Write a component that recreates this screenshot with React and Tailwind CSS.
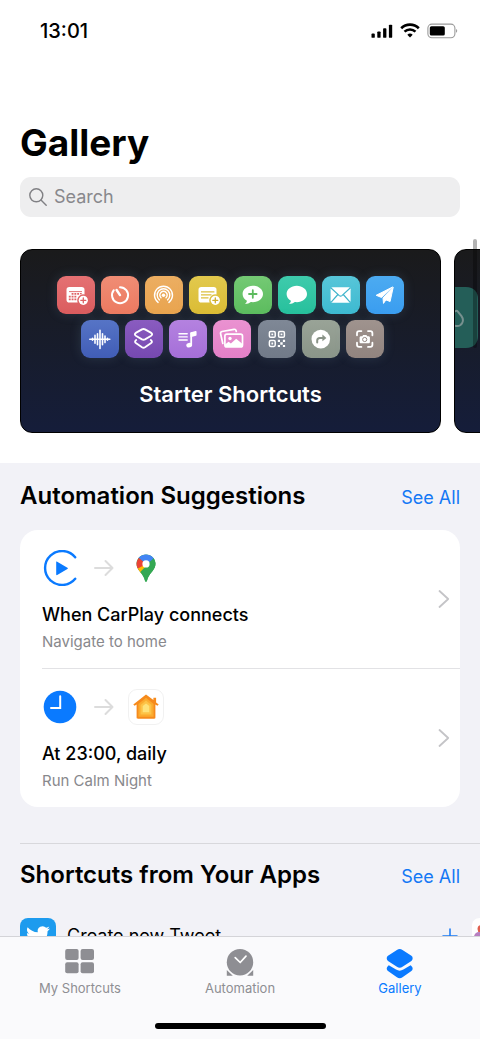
import React from "react";

function SignalIcon() {
  return (
    <svg viewBox="0 0 22 14" className="h-[14px] w-[22px]" fill="#000" aria-hidden="true">
      <rect x="0.5" y="9.6" width="3.3" height="4.2" rx="0.9" />
      <rect x="6.3" y="7.4" width="3.3" height="6.4" rx="0.9" />
      <rect x="12.1" y="4.2" width="3.3" height="9.6" rx="0.9" />
      <rect x="17.9" y="0.7" width="3.3" height="13.1" rx="0.9" />
    </svg>
  );
}

function WifiIcon() {
  return (
    <svg viewBox="0 0 20 15" className="h-[15px] w-[20px]" fill="none" stroke="#000" aria-hidden="true">
      <path d="M1.2 5.2a12.6 12.6 0 0 1 17.6 0" strokeWidth="2.6" />
      <path d="M4.5 8.7a7.9 7.9 0 0 1 11 0" strokeWidth="2.5" />
      <path d="M10 14.6l-2.7-2.8a4 4 0 0 1 5.4 0z" fill="#000" stroke="none" />
    </svg>
  );
}

function BatteryIcon() {
  return (
    <svg viewBox="0 0 31 16" className="h-4 w-[31px]" aria-hidden="true">
      <rect x="0.9" y="1.1" width="27" height="13.6" rx="4" fill="none" stroke="#9a9a9a" strokeWidth="1.1" />
      <rect x="2.8" y="3.2" width="15" height="9.4" rx="1.6" fill="#000" />
      <path d="M29.2 6.1c1.3.7 1.3 3 0 3.7z" fill="#8a8a8a" />
    </svg>
  );
}

const calendarFrame = (
  <path d="M12.3 11h12.4a2.8 2.8 0 0 1 2.8 2.8v4.6a6 6 0 0 0-6.8 8.1h-8.4a2.8 2.8 0 0 1-2.8-2.8v-9.9a2.8 2.8 0 0 1 2.8-2.8z" fill="#fff" />
);

function PlusBadge({ color }) {
  return (
    <g>
      <circle cx="26.3" cy="24.3" r="4.6" fill="#fff" />
      <path d="M26.3 21.8v5M23.8 24.3h5" stroke={color} strokeWidth="1.3" strokeLinecap="round" />
    </g>
  );
}

const bubble = (
  <path d="M18.8 9.8c-5.7 0-10.2 3.6-10.2 8.2 0 2.9 1.7 5.3 4.3 6.8-.1 1.2-.9 2.3-1.9 3.3 2.3 0 4.4-.8 5.8-2 .7.1 1.3.1 2 .1 5.7 0 10.2-3.6 10.2-8.2s-4.5-8.2-10.2-8.2z" fill="#fff" />
);

const tileGlyphs = {
  calendar: (
    <g>
      {calendarFrame}
      <path d="M12 15.6h13" stroke="#df6365" strokeWidth="0.9" />
      <path d="M14.6 17h1.9v1.8h-1.9zM17.4 17h1.9v1.8h-1.9zM20.2 17h1.9v1.8h-1.9zM23 17h1.7v1.2H23zM11.8 19.7h1.9v1.8h-1.9zM14.6 19.7h1.9v1.8h-1.9zM17.4 19.7h1.9v1.8h-1.9zM11.8 22.4h1.9v1.8h-1.9zM14.6 22.4h1.9v1.8h-1.9zM17.4 22.4h1.9v1.8h-1.9z" fill="#df6365" />
      <PlusBadge color="#de6264" />
    </g>
  ),
  timer: (
    <g fill="none" stroke="#fff" strokeLinecap="round">
      <path d="M19 11.2a8 8 0 1 1-6.2 3" strokeWidth="2" />
      <path d="M15.6 14l3.4 5.1" strokeWidth="2.4" />
    </g>
  ),
  airdrop: (
    <g fill="none" stroke="#fff" strokeWidth="1.4" strokeLinecap="round">
      <path d="M13.1 26.4a9 9 0 1 1 10.8 0" />
      <path d="M14.4 23.9a6.3 6.3 0 1 1 8.2 0" />
      <path d="M16 21.7a3.7 3.7 0 1 1 5 0" />
      <circle cx="18.5" cy="19.2" r="1.7" fill="#fff" stroke="none" />
    </g>
  ),
  note: (
    <g>
      {calendarFrame}
      <path d="M12 15.8h13.4M12 18.8h10.5M12 21.8h7.5" stroke="#dcbf3c" strokeWidth="1.3" />
      <PlusBadge color="#cfae2c" />
    </g>
  ),
  bubblePlus: (
    <g>
      {bubble}
      <path d="M18.8 14.2v7.6M15 18h7.6" stroke="#5dbb5e" strokeWidth="1.8" strokeLinecap="round" />
    </g>
  ),
  bubble,
  mail: (
    <g>
      <rect x="8.6" y="11.2" width="20" height="15.6" rx="2" fill="#fff" />
      <path d="M9 12l8.3 7.6a2 2 0 0 0 2.6 0L28.2 12M9.2 26.2l6.7-7.7M28 26.2l-6.7-7.7" fill="none" stroke="#3fb4cb" strokeWidth="1.2" />
    </g>
  ),
  plane: (
    <g fill="#fff" stroke="#fff" strokeWidth="1" strokeLinejoin="round">
      <path d="M26.6 11L10.2 19.3l5.4 2.2z" />
      <path d="M27.2 11.3L17 22.1l.5 5.3 2.4-3.5 4.2 1.6z" />
    </g>
  ),
  wave: (
    <g stroke="#fff" strokeWidth="1.6" strokeLinecap="round">
      <path d="M8.8 19.3h20M11.5 18.4v1.8M14 15.4v7.8M16.500 13.800v11M19 10.200v18.200M21.500 13.800v11M24 16v6.600M26.500 18.400v1.800" />
    </g>
  ),
  layers: (
    <g fill="none" stroke="#fff" strokeWidth="1.9" strokeLinejoin="round" strokeLinecap="round">
      <path d="M17 9.3l-5.8 3.3c-1.8 1.1-1.8 2.300 0 3.400l5.800 3.300c1 .5 2 .5 3 0l5.800-3.300c1.800-1.100 1.800-2.300 0-3.400L20 9.300c-1-.5-2-.5-3 0z" />
      <path d="M11.200 20c-1.500 1.100-1.500 2.300 0 3.300l5.800 4c1 .6 2 .6 3 0l5.800-4c1.500-1 1.500-2.200 0-3.300" />
    </g>
  ),
  music: (
    <g>
      <path d="M10 13.8h8.2M10 16.9h8.2M10 20h8.2" stroke="#fff" strokeWidth="1.4" strokeLinecap="round" />
      <path d="M22.200 25V13.200" stroke="#fff" strokeWidth="1.800" strokeLinecap="round" />
      <path d="M22.200 12.900l4.600-1.200v3.300l-4.600 1.200z" fill="#fff" stroke="#fff" strokeWidth="1.500" strokeLinejoin="round" />
      <ellipse cx="20.200" cy="25.200" rx="2.900" ry="2.300" fill="#fff" transform="rotate(-15 20 25.200)" />
    </g>
  ),
  photos: (
    <g>
      <path d="M9.800 23.500l-2.200-9.700c-.3-1.200.3-2 1.400-2.300l12-2.200c1.200-.2 1.900.4 2.100 1.500l.2.700" fill="none" stroke="#fff" strokeWidth="1.700" strokeLinecap="round" />
      <rect x="11.9" y="14.1" width="17.6" height="12.8" rx="2" fill="none" stroke="#fff" strokeWidth="1.7" />
      <circle cx="17" cy="18.5" r="1.7" fill="#fff" />
      <path d="M12 24.6l3.6-2.9 2.3 1.7 5.3-4.7 6.3 5.3v2.9H12z" fill="#fff" />
    </g>
  ),
  qr: (
    <g>
      <g fill="none" stroke="#fff" strokeWidth="1.5">
        <rect x="11.4" y="11.4" width="5.8" height="5.8" rx="1.3" />
        <rect x="20.6" y="11.4" width="5.8" height="5.8" rx="1.3" />
        <rect x="11.4" y="20.6" width="5.8" height="5.8" rx="1.3" />
      </g>
      <path d="M13.4 13.4h1.8v1.8h-1.8zM22.6 13.4h1.8v1.8h-1.8zM13.4 22.6h1.8v1.8h-1.8zM19.8 19.8h2.2v2.2h-2.2zM24.9 19.8h2.2v2.2h-2.2zM22.3 22.3h2.4v2.4h-2.4zM19.8 24.9h2.2v2.2h-2.2zM24.9 24.9h2.2v2.2h-2.2z" fill="#fff" />
    </g>
  ),
  turn: (
    <g>
      <circle cx="18.8" cy="19.1" r="9.3" fill="#fff" />
      <path d="M15.2 22.6v-2c0-1.8 1-2.7 2.7-2.7h3" fill="none" stroke="#899387" strokeWidth="2" strokeLinecap="round" />
      <path d="M20.4 14.5l4 3.4-4 3.4z" fill="#899387" />
    </g>
  ),
  scan: (
    <g>
      <path d="M11 15.3v-2.1c0-1.3.8-2.1 2.1-2.1h2.3M22 11.1h2.3c1.3 0 2.1.8 2.1 2.1v2.1M26.4 22.7v2.1c0 1.3-.8 2.1-2.1 2.1H22M15.4 26.9h-2.3c-1.3 0-2.1-.8-2.1-2.1v-2.1" fill="none" stroke="#fff" strokeWidth="1.8" strokeLinecap="round" />
      <path d="M15 16.2h1.3l.8-1.2h3.3l.8 1.2h1.3c.8 0 1.4.6 1.4 1.4v4.3c0 .8-.6 1.4-1.4 1.4H15c-.8 0-1.4-.6-1.4-1.4v-4.3c0-.8.6-1.4 1.4-1.4z" fill="#fff" />
      <circle cx="18.7" cy="19.5" r="2.1" fill="none" stroke="#978a85" strokeWidth="1" />
    </g>
  ),
};

const topTiles = [
  ["calendar", "bg-linear-to-b from-[#e57173] to-[#da5c5e]"],
  ["timer", "bg-linear-to-b from-[#f08d75] to-[#ec7a60]"],
  ["airdrop", "bg-linear-to-b from-[#ecae62] to-[#e9a44e]"],
  ["note", "bg-linear-to-b from-[#e2c94d] to-[#dbbc34]"],
  ["bubblePlus", "bg-linear-to-b from-[#74ca74] to-[#5cbc5e]"],
  ["bubble", "bg-linear-to-b from-[#3ecbac] to-[#26c09c]"],
  ["mail", "bg-linear-to-b from-[#57c6d9] to-[#3dbad1]"],
  ["plane", "bg-linear-to-b from-[#4cabf1] to-[#3a9df0]"],
];

const bottomTiles = [
  ["wave", "bg-linear-to-b from-[#5674c6] to-[#415db6]"],
  ["layers", "bg-linear-to-b from-[#8a5cc0] to-[#7649b0]"],
  ["music", "bg-linear-to-b from-[#b482e0] to-[#a56fd8]"],
  ["photos", "bg-linear-to-b from-[#ea92d1] to-[#e280c7]"],
  ["qr", "bg-linear-to-b from-[#7f8896] to-[#717a88]"],
  ["turn", "bg-linear-to-b from-[#99a397] to-[#8a9589]"],
  ["scan", "bg-linear-to-b from-[#9f938e] to-[#91847f]"],
];

function Tile({ glyph, color }) {
  return (
    <span className={`size-[38px] rounded-[9px] shadow-[0_0_12px_rgba(130,170,200,0.18)] ${color}`}>
      <svg viewBox="0 0 38 38" className="size-full" aria-hidden="true">
        {tileGlyphs[glyph]}
      </svg>
    </span>
  );
}

function ArrowIcon() {
  return (
    <svg viewBox="0 0 20 18" className="h-[18px] w-5" fill="none" stroke="#dcdcdc" strokeWidth="2" strokeLinecap="round" strokeLinejoin="round" aria-hidden="true">
      <path d="M1 9h17.5M11.5 2l7 7-7 7" />
    </svg>
  );
}

function CarPlayIcon() {
  return (
    <svg viewBox="0 0 36 36" className="size-9" aria-hidden="true">
      <path d="M33.2 7.2a17 17 0 1 0 0 21.6" fill="none" stroke="#0a7aff" strokeWidth="2.4" strokeLinecap="round" />
      <path d="M14.2 12v12.6c0 .5.5.8 1 .5l10.2-6c.6-.4.6-1 0-1.4l-10.200-6c-.5-.3-1-.1-1 .3z" fill="#0a7aff" />
    </svg>
  );
}

function MapsIcon() {
  return (
    <svg viewBox="0 0 36 36" className="size-9" aria-hidden="true">
      <clipPath id="pin">
        <path d="M18 4.5c5.3 0 9.5 4.1 9.5 9.3 0 3-1.2 5-3.3 7.6-2.3 2.9-4.3 5.3-5.2 9.4-.2.7-.5 1-1 1s-.8-.3-1-1c-.9-4.1-2.9-6.5-5.2-9.4-2.1-2.6-3.3-4.6-3.3-7.6 0-5.2 4.2-9.3 9.5-9.3z" />
      </clipPath>
      <g clipPath="url(#pin)">
        <rect x="6" y="3" width="24" height="30" fill="#34a853" />
        <path d="M10 3h16l1 5.5-9 5.5-8-6z" fill="#4285f4" />
        <path d="M10.7 7.8l7.3 6.2-7.5 8L5 18z" fill="#ea4335" />
        <path d="M18 14.2l-9.500 5 3.500 6 9.200-8z" fill="#fbbc04" />
        <path d="M11.500 22.800L25.800 8l4 3V24L17 33z" fill="#34a853" />
      </g>
      <circle cx="18" cy="13.900" r="3.600" fill="#fff" />
    </svg>
  );
}

function ClockIcon() {
  return (
    <svg viewBox="0 0 36 36" className="size-9" aria-hidden="true">
      <circle cx="18" cy="18" r="16.3" fill="#0a7aff" />
      <path d="M18.2 7.2V19H9" fill="none" stroke="#fff" strokeWidth="2" strokeLinecap="round" />
    </svg>
  );
}

function HomeIcon() {
  return (
    <svg viewBox="0 0 36 36" className="size-9" aria-hidden="true">
      <rect x="0.5" y="0.5" width="35" height="35" rx="8.5" fill="#fff" stroke="#f1f1f1" />
      <path d="M18 5.5L5.3 15.600l1.300 1.200 2-1.200V28.500c0 .8.400 1.200 1.200 1.200h16.400c.8 0 1.200-.4 1.200-1.200V15.600l2 1.200 1.300-1.200-2.600-2.200V8.800h-2.700v2.300z" fill="#f68a1c" />
      <path d="M18 8.800l-7.600 6.100v12.900h15.200V14.900z" fill="#fbab2f" />
      <path d="M18 11.600L12.600 16v9.500h10.800V16z" fill="#fdc347" />
      <path d="M18 14.400l-3.300 2.700v6.200h6.600v-6.200z" fill="#fee27a" />
    </svg>
  );
}

function ChevronRight() {
  return (
    <svg viewBox="0 0 12 20" className="h-5 w-3 shrink-0" fill="none" stroke="#c4c4c7" strokeWidth="1.8" strokeLinecap="round" strokeLinejoin="round" aria-hidden="true">
      <path d="M1.5 2l8.7 8-8.7 8" />
    </svg>
  );
}

function SuggestionRow({ trigger, target, title, subtitle, last }) {
  return (
    <a href="#suggestion" className={`ml-[22px] flex items-center justify-between pr-[10px] ${last ? "" : "border-b border-[#e2e2e5]"}`}>
      <span className="flex flex-col pt-5 pb-4">
        <span className="flex items-center">
          {trigger}
          <span className="mr-[14px] ml-4">
            <ArrowIcon />
          </span>
          {target}
        </span>
        <span className="mt-[17px] text-[18px] leading-6 font-medium text-black">{title}</span>
        <span className="mt-[5px] text-[15px] leading-5 text-[#88888c]">{subtitle}</span>
      </span>
      <ChevronRight />
    </a>
  );
}

function SectionHeader({ title }) {
  return (
    <div className="flex items-baseline justify-between">
      <h2 className="text-[24px] leading-8 font-semibold text-black">{title}</h2>
      <a href="#all" className="text-[18px] leading-6 text-[#1478f5]">See All</a>
    </div>
  );
}

function TwitterTile() {
  return (
    <svg viewBox="0 0 36 36" className="size-9 shrink-0" aria-hidden="true">
      <rect width="36" height="36" rx="8" fill="#1d9bee" />
      <path transform="translate(6 6)" d="M23.95 4.57a10 10 0 0 1-2.82.77 4.96 4.96 0 0 0 2.16-2.72c-.95.55-2 .95-3.12 1.18a4.92 4.92 0 0 0-8.38 4.48C7.69 8.1 4.07 6.13 1.64 3.16a4.82 4.82 0 0 0-.67 2.48c0 1.71.87 3.21 2.19 4.1a4.9 4.9 0 0 1-2.23-.62v.06a4.92 4.92 0 0 0 3.95 4.83 5 5 0 0 1-2.21.08 4.94 4.94 0 0 0 4.6 3.42A9.87 9.87 0 0 1 0 19.54a13.99 13.99 0 0 0 7.55 2.21c9.05 0 14-7.5 14-13.98 0-.21 0-.42-.02-.63a9.94 9.94 0 0 0 2.42-2.57z" fill="#fff" />
    </svg>
  );
}

function TabIcon({ name }) {
  if (name === "grid") {
    return (
      <svg viewBox="0 0 32 32" className="size-8" fill="#8e8e93" aria-hidden="true">
        <rect x="1.2" y="4" width="13.4" height="11" rx="2" />
        <rect x="16.6" y="4" width="13.4" height="11" rx="2" />
        <rect x="1.2" y="17.2" width="13.4" height="11" rx="2" />
        <rect x="16.6" y="17.2" width="13.4" height="11" rx="2" />
      </svg>
    );
  }
  if (name === "clock") {
    return (
      <svg viewBox="0 0 32 32" className="size-8" aria-hidden="true">
        <circle cx="16" cy="17.2" r="13.2" fill="#8e8e93" />
        <path d="M2.8 25v5.8h6zM29.2 25v5.8h-6z" fill="#8e8e93" />
        <path d="M11.2 12.7l5 4.8 5.8-6.3" fill="none" stroke="#fff" strokeWidth="1.7" strokeLinecap="round" strokeLinejoin="round" />
      </svg>
    );
  }
  return (
    <svg viewBox="0 0 32 34" className="-mb-[2px] h-[34px] w-8" fill="#0a7aff" aria-hidden="true">
      <path d="M12.900 5L4 10.700c-1.700 1.100-1.700 4.100 0 5.200l8.900 5.800c1.900 1.300 3.700 1.300 5.600 0l8.900-5.800c1.700-1.100 1.700-4.100 0-5.200L18.500 5c-1.900-1.300-3.700-1.300-5.600 0z" />
      <path d="M4.800 20.300l-.8.600c-1.700 1.200-1.700 4 0 5.100l8.900 6.200c1.900 1.300 3.700 1.300 5.600 0l8.900-6.200c1.700-1.100 1.700-3.900 0-5.100l-.8-.6-7.200 4.300c-2.500 1.400-4.900 1.400-7.400 0z" />
    </svg>
  );
}

function Tab({ icon, label, active }) {
  return (
    <button type="button" className={`flex flex-1 flex-col items-center ${active ? "text-[#0a7aff]" : "text-[#8e8e93]"}`}>
      <TabIcon name={icon} />
      <span className="mt-[3px] text-[13px] leading-4">{label}</span>
    </button>
  );
}

export default function App() {
  return (
    <div className="flex h-dvh flex-col overflow-hidden bg-white font-['Inter','Liberation_Sans',sans-serif]">
      <main className="relative min-h-0 flex-1 overflow-y-auto bg-[#f2f2f7] [scrollbar-width:none]">
        <div className="bg-white pb-[30px]">
          <header className="flex h-[61px] items-center justify-between pr-[22px] pl-10">
            <time className="text-[20px] leading-6 font-medium text-black">13:01</time>
            <div className="flex items-center gap-[7px]">
              <SignalIcon />
              <WifiIcon />
              <BatteryIcon />
            </div>
          </header>

          <div className="px-5 pt-[58px]">
            <h1 className="text-[37px] leading-[48px] font-bold text-black">Gallery</h1>
            <label className="mt-[10px] flex h-10 items-center gap-[7px] rounded-[11px] bg-[#eeeeef] px-[9px]">
              <svg viewBox="0 0 18 18" className="size-[18px]" fill="none" stroke="#808084" strokeWidth="1.4" strokeLinecap="round" aria-hidden="true">
                <circle cx="7.3" cy="7.3" r="6.5" />
                <path d="M12 12l5.2 5.2" />
              </svg>
              <input type="search" aria-label="Search" placeholder="Search" className="min-w-0 flex-1 bg-transparent text-[18px] leading-6 outline-none placeholder:text-[#88888c]" />
            </label>
          </div>

          <div className="mt-8 flex gap-[13px] overflow-x-auto pl-5 [scrollbar-width:none]">
            <section className="flex h-[184px] w-[calc(100%-39px)] shrink-0 flex-col items-center rounded-xl border border-black bg-linear-to-b from-[#1a1a1b] to-[#151d3a] pt-[26px]">
              <div className="flex w-[348px] justify-between">
                {topTiles.map(([glyph, color]) => (
                  <Tile key={glyph} glyph={glyph} color={color} />
                ))}
              </div>
              <div className="mt-[6px] flex w-[348px] justify-between pr-5 pl-6">
                {bottomTiles.map(([glyph, color]) => (
                  <Tile key={glyph} glyph={glyph} color={color} />
                ))}
              </div>
              <h2 className="mt-5 text-[22px] leading-8 font-semibold text-white">Starter Shortcuts</h2>
            </section>
            <section className="h-[184px] w-[calc(100%-39px)] shrink-0 overflow-hidden rounded-xl border border-black bg-linear-to-b from-[#1a1a1b] to-[#151d3a] pt-[37px]">
              <svg viewBox="0 0 24 61" className="h-[61px] w-6" aria-hidden="true">
                <path d="M0 0h11c8 0 12 5 12 12v37c0 7-4 12-12 12H0z" fill="#245e58" />
                <path d="M-1 25l1.2-.8c1.2-.8 2-.5 2.9.6l3.4 4.3c3.3 4.700.2 10-4.500 10-1.400 0-2.300-.3-3-.8" fill="none" stroke="#77918f" strokeWidth="2" />
              </svg>
            </section>
          </div>
        </div>

        <section className="px-5 pt-[17px]">
          <SectionHeader title="Automation Suggestions" />
          <div className="mt-[18px] rounded-[18px] bg-white">
            <SuggestionRow trigger={<CarPlayIcon />} target={<MapsIcon />} title="When CarPlay connects" subtitle="Navigate to home" />
            <SuggestionRow trigger={<ClockIcon />} target={<HomeIcon />} title="At 23:00, daily" subtitle="Run Calm Night" last />
          </div>
        </section>

        <section className="mt-9 ml-5 border-t border-[#d8d8dc] pt-[15px]">
          <div className="pr-5">
            <SectionHeader title="Shortcuts from Your Apps" />
          </div>
          <div className="mt-[27px] flex items-center gap-[11px]">
            <TwitterTile />
            <span className="flex-1 text-[18px] leading-6 text-black">Create new Tweet</span>
            <button type="button" aria-label="Add Create new Tweet" className="mr-[3px]">
              <svg viewBox="0 0 16 16" className="size-4" stroke="#1478f5" strokeWidth="1.5" strokeLinecap="round" aria-hidden="true">
                <path d="M8 1v14M1 8h14" />
              </svg>
            </button>
            <svg viewBox="0 0 8 36" className="h-9 w-2" aria-hidden="true">
              <path d="M8 0C3 0 0 3 0 8v28h8z" fill="#fff" />
              <circle cx="9.5" cy="11" r="4" fill="#e0604f" />
              <circle cx="7" cy="19" r="5" fill="#b77fc0" />
            </svg>
          </div>
        </section>

        <div className="absolute top-[239px] right-[3px] h-[109px] w-1 rounded-full bg-black/30" />
      </main>

      <nav className="flex flex-col border-t border-[#d4d4d8] bg-[#fafafc]">
        <div className="flex pt-2">
          <Tab icon="grid" label="My Shortcuts" />
          <Tab icon="clock" label="Automation" />
          <Tab icon="layers" label="Gallery" active />
        </div>
        <div className="mx-auto mt-[27px] mb-[10px] h-[6px] w-[171px] rounded-full bg-black" />
      </nav>
    </div>
  );
}
